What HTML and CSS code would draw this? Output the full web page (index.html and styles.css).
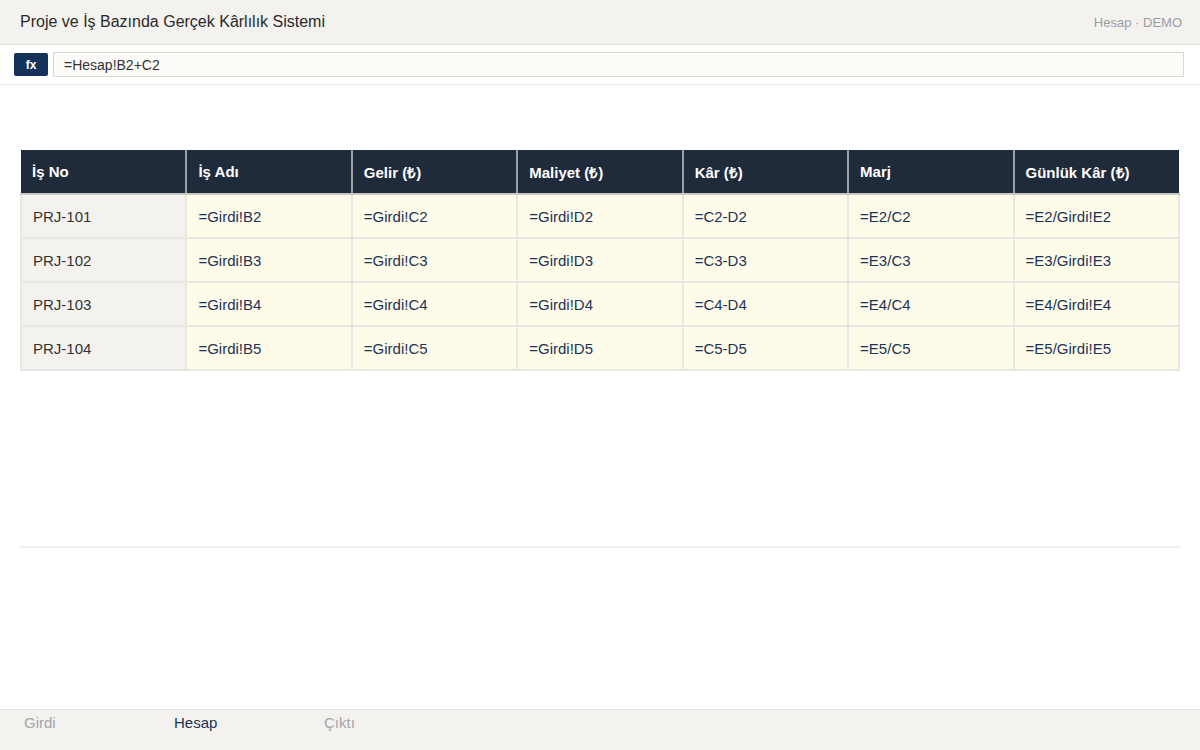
FILE: index.html
```html
<!DOCTYPE html>
<html lang="tr">
<head>
<meta charset="utf-8">
<title>Proje ve İş Bazında Gerçek Kârlılık Sistemi</title>
<link rel="stylesheet" href="styles.css">
</head>
<body>
<div class="app">
  <header class="topbar">
    <div class="title">Proje ve İş Bazında Gerçek Kârlılık Sistemi</div>
    <div class="meta">Hesap · DEMO</div>
  </header>
  <div class="formula-bar">
    <div class="fx">fx</div>
    <div class="formula-input">=Hesap!B2+C2</div>
  </div>
  <main class="content">
    <table class="sheet">
      <thead>
        <tr>
          <th>İş No</th><th>İş Adı</th><th>Gelir (₺)</th><th>Maliyet (₺)</th><th>Kâr (₺)</th><th>Marj</th><th>Günlük Kâr (₺)</th>
        </tr>
      </thead>
      <tbody>
        <tr><td class="key">PRJ-101</td><td>=Girdi!B2</td><td>=Girdi!C2</td><td>=Girdi!D2</td><td>=C2-D2</td><td>=E2/C2</td><td>=E2/Girdi!E2</td></tr>
        <tr><td class="key">PRJ-102</td><td>=Girdi!B3</td><td>=Girdi!C3</td><td>=Girdi!D3</td><td>=C3-D3</td><td>=E3/C3</td><td>=E3/Girdi!E3</td></tr>
        <tr><td class="key">PRJ-103</td><td>=Girdi!B4</td><td>=Girdi!C4</td><td>=Girdi!D4</td><td>=C4-D4</td><td>=E4/C4</td><td>=E4/Girdi!E4</td></tr>
        <tr><td class="key">PRJ-104</td><td>=Girdi!B5</td><td>=Girdi!C5</td><td>=Girdi!D5</td><td>=C5-D5</td><td>=E5/C5</td><td>=E5/Girdi!E5</td></tr>
      </tbody>
    </table>
    <div class="divider"></div>
  </main>
  <nav class="tabs">
    <div class="tab">Girdi</div>
    <div class="tab active">Hesap</div>
    <div class="tab">Çıktı</div>
  </nav>
</div>
</body>
</html>
```

FILE: styles.css
```css
* { box-sizing: border-box; }
html, body { margin: 0; padding: 0; }
body {
  font-family: "Liberation Sans", Arial, sans-serif;
  background: #ffffff;
  color: #222;
}
.app {
  width: 1200px;
  height: 750px;
  display: flex;
  flex-direction: column;
}
.topbar {
  height: 45px;
  background: #f3f2ee;
  border-bottom: 1px solid #e4e2dc;
  display: flex;
  align-items: center;
  justify-content: space-between;
  padding: 0 18px 0 20px;
}
.title {
  font-size: 16px;
  color: #2a2a2a;
}
.meta {
  font-size: 13px;
  color: #9a9ca3;
}
.formula-bar {
  height: 40px;
  background: #fff;
  border-bottom: 1px solid #e6e4df;
  display: flex;
  align-items: center;
  gap: 5px;
  padding: 0 16px 0 14px;
}
.fx {
  width: 34px;
  height: 23px;
  background: #14315a;
  color: #fff;
  font-size: 12px;
  font-weight: bold;
  border-radius: 2px;
  display: flex;
  align-items: center;
  justify-content: center;
}
.formula-input {
  flex: 1;
  height: 25px;
  background: #fcfbf8;
  border: 1px solid #dcd9d1;
  font-size: 14px;
  color: #333;
  display: flex;
  align-items: center;
  padding-left: 10px;
}
.content {
  flex: 1;
  padding: 65px 20px 0 20px;
}
.sheet {
  width: 1160px;
  border-collapse: collapse;
  table-layout: fixed;
  font-size: 15px;
}
.sheet th {
  background: #1f2a3b;
  color: #fff;
  font-weight: bold;
  text-align: left;
  height: 44px;
  padding: 0 11px;
  font-size: 15px;
  border-left: 2px solid #9a9fa8;
  border-bottom: 2px solid #c9c8c4;
}
.sheet th:first-child { border-left: none; }
.sheet td {
  height: 44px;
  padding: 0 11px;
  background: #fefce8;
  color: #1b3358;
  border: 2px solid #e9e7e1;
}
.sheet td.key {
  background: #f3f2ee;
  color: #333;
}
.divider {
  margin-top: 175px;
  height: 2px;
  background: #efeeea;
}
.tabs {
  height: 41px;
  background: #f3f2ee;
  border-top: 1px solid #e4e2dc;
  display: flex;
  padding-left: 24px;
}
.tab {
  width: 150px;
  font-size: 15px;
  color: #a2a5ac;
  padding-top: 4px;
}
.tab.active { color: #1b3358; }
```
